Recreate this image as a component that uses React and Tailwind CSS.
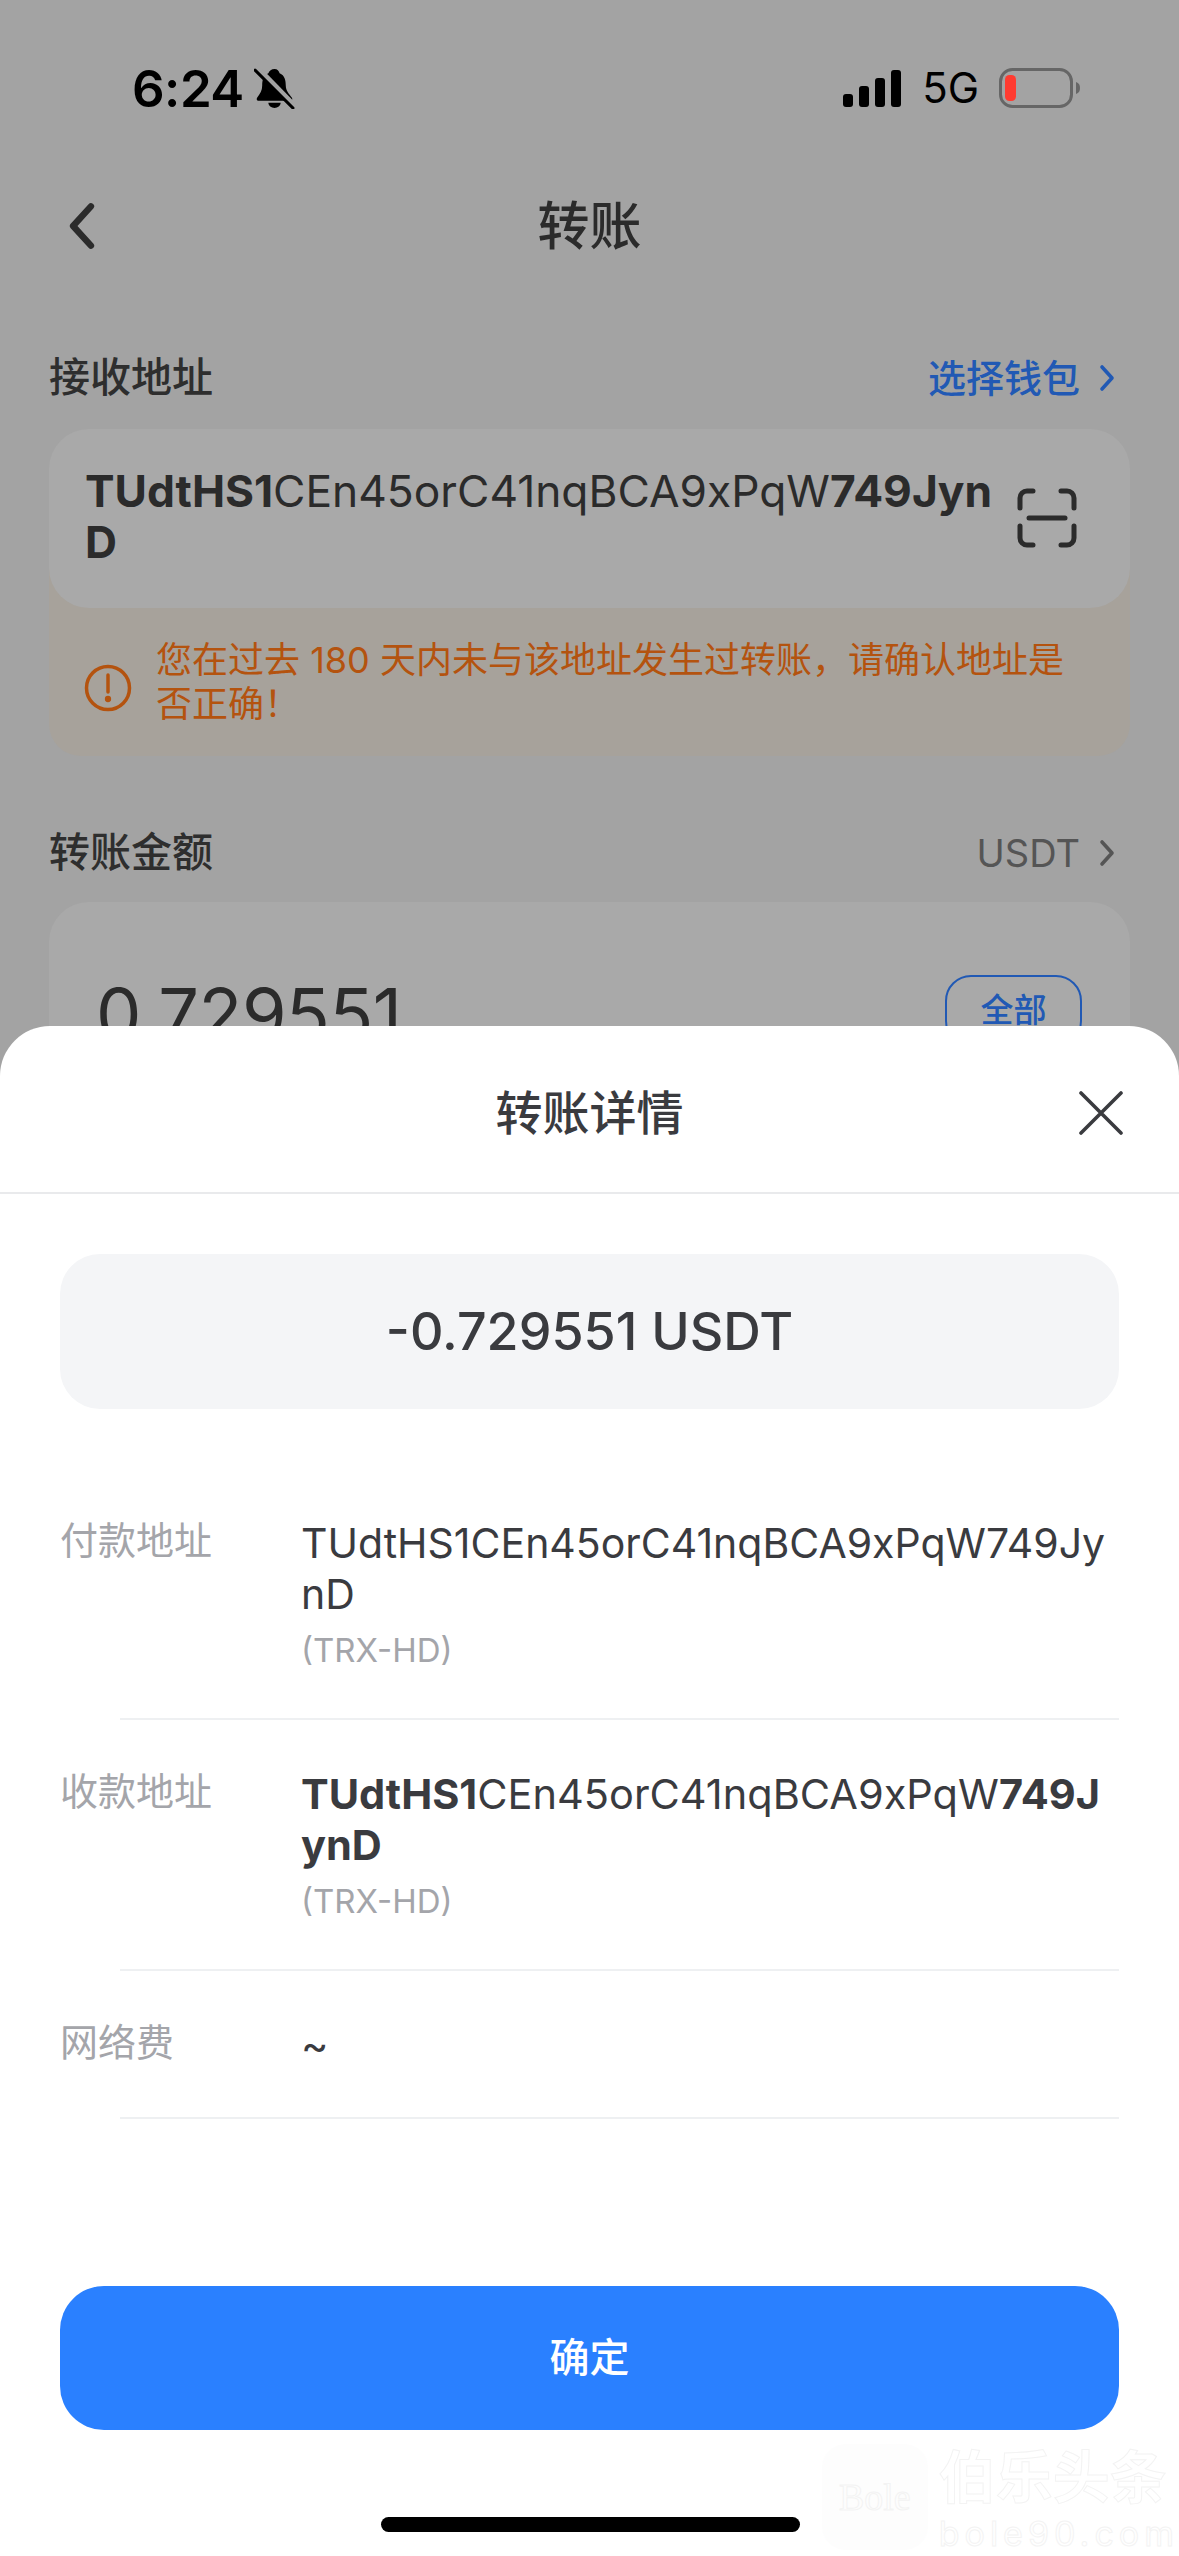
const Chevron = ({ className }) => (
  <svg viewBox="0 0 16 28" fill="none" stroke="currentColor" strokeWidth="3.6" strokeLinecap="round" strokeLinejoin="round" className={className}>
    <path d="M3 3l10 11L3 25" />
  </svg>
);

const StatusBar = () => (
  <div className="flex h-[56px] items-center justify-between pl-[132px] pr-[98px] text-black">
    <div className="flex items-center gap-[10px]">
      <span className="text-[51px] font-semibold leading-none tracking-[-0.5px]">6:24</span>
      <svg viewBox="0 0 40 40" className="h-[41px] w-[41px]">
        <path d="M20 1c3 0 4 2 5 4 5 2 6 7 6 12 0 5 3 8 6 12 1 2 0 3-2 3H5c-2 0-3-1-2-3 3-4 5-7 5-12 0-5 1-10 6-12 1-2 3-4 6-4z" fill="#000" />
        <path d="M14 34h12c0 3-3 5-6 5s-6-2-6-5z" fill="#000" />
        <path d="M3 0l36 37" stroke="#a3a3a3" strokeWidth="6" />
        <path d="M1 2l37 37" stroke="#000" strokeWidth="3" strokeLinecap="round" />
      </svg>
    </div>
    <div className="flex items-center">
      <div className="flex h-[38px] items-end gap-[6px]">
        <div className="h-[13px] w-[10px] rounded-[3px] bg-black" />
        <div className="h-[21px] w-[10px] rounded-[3px] bg-black" />
        <div className="h-[29px] w-[10px] rounded-[3px] bg-black" />
        <div className="h-[37px] w-[10px] rounded-[3px] bg-black" />
      </div>
      <span className="ml-[21px] text-[42px] font-normal leading-none">5G</span>
      <svg viewBox="0 0 82 40" className="ml-[20px] h-[40px] w-[82px]">
        <rect x="1.5" y="1.5" width="71" height="37" rx="12" fill="none" stroke="#666" strokeWidth="3" />
        <rect x="6" y="7" width="11" height="26" rx="4.5" fill="#ff3b30" />
        <path d="M77 14c3 1 4 3 4 6s-1 5-4 6z" fill="#666" />
      </svg>
    </div>
  </div>
);

const ScanIcon = () => (
  <svg viewBox="0 0 60 60" fill="none" stroke="#2b2b2b" strokeWidth="5" strokeLinecap="round" className="h-[60px] w-[60px]">
    <path d="M16 3H10a7 7 0 0 0-7 7v10" />
    <path d="M44 3h6a7 7 0 0 1 7 7v10" />
    <path d="M16 57H10a7 7 0 0 1-7-7V38" />
    <path d="M44 57h6a7 7 0 0 0 7-7V38" />
    <path d="M12 30h36" />
  </svg>
);

const Background = () => (
  <div className="pt-[60px]">
    <StatusBar />
    <div className="relative mt-[60px] flex h-[100px] items-center justify-center">
      <Chevron className="absolute left-[66px] h-[50px] w-[32px] -scale-x-100 text-[#2b2b2b]" />
      <span className="pt-[2px] text-[52px] font-medium leading-none text-[#2b2b2b]">转账</span>
    </div>

    <div className="mt-[74px] flex h-[56px] items-center justify-between pl-[49px] pr-[64px]">
      <span className="text-[41px] font-medium text-[#2e2e2e]">接收地址</span>
      <div className="flex items-center gap-[19px] text-[#2159b4]">
        <span className="text-[38px] font-medium">选择钱包</span>
        <Chevron className="h-[28px] w-[16px]" />
      </div>
    </div>

    <div className="relative z-10 mx-[49px] mt-[23px] flex h-[179px] items-start justify-between rounded-[40px] bg-[#a9a9a9] pl-[36px] pr-[53px] pt-[37px]">
      <p className="w-[918px] break-all text-[44.3px] leading-[51px] text-[#2b2b2b]">
        <b className="font-bold">TUdtHS1</b>CEn45orC41nqBCA9xPqW<b className="font-bold">749JynD</b>
      </p>
      <div className="mt-[22px]">
        <ScanIcon />
      </div>
    </div>

    <div className="mx-[49px] -mt-[40px] flex h-[188px] items-start rounded-b-[32px] bg-[#a7a29b] pl-[35px] pr-[60px] pt-[70px] text-[#b4530f]">
      <svg viewBox="0 0 48 48" fill="none" stroke="currentColor" strokeWidth="3.5" strokeLinecap="round" className="mt-[26px] h-[48px] w-[48px] shrink-0">
        <circle cx="24" cy="24" r="21.5" />
        <path d="M24 11v17" />
        <circle cx="24" cy="35" r="1.4" fill="currentColor" />
      </svg>
      <p className="ml-[24px] text-[36px] leading-[44px]">
        您在过去 180 天内未与该地址发生过转账，请确认地址是否正确！
      </p>
    </div>

    <div className="mt-[69px] flex h-[56px] items-center justify-between pl-[49px] pr-[64px]">
      <span className="text-[41px] font-medium text-[#2e2e2e]">转账金额</span>
      <div className="flex items-center gap-[19px] text-[#555]">
        <span className="text-[38px]">USDT</span>
        <Chevron className="h-[28px] w-[16px]" />
      </div>
    </div>

    <div className="mx-[49px] mt-[21px] flex h-[240px] items-start justify-between rounded-[40px] bg-[#a9a9a9] pl-[47px] pr-[48px] pt-[76px]">
      <span className="text-[72px] leading-none tracking-[-0.5px] text-[#2b2b2b]">0.729551</span>
      <div className="-mt-[3px] flex h-[72px] w-[137px] items-center justify-center rounded-[26px] border-2 border-[#2159b4] text-[33px] font-medium text-[#2159b4]">
        全部
      </div>
    </div>
  </div>
);

const Row = ({ label, children, sub, rowClass, valueClass }) => (
  <>
    <div className={`flex pt-[49px] ${rowClass}`}>
      <span className="w-[241px] shrink-0 text-[38px] leading-[44px] text-[#a4a5aa]">{label}</span>
      <div className="min-w-0 flex-1">
        <p className={`break-all leading-[51px] text-[#3a3b3f] ${valueClass}`}>{children}</p>
        {sub && <p className="mt-[5px] text-[33px] leading-[50px] text-[#a4a5aa]">{sub}</p>}
      </div>
    </div>
    <div className="ml-[60px] h-[2px] bg-[#eef0f2]" />
  </>
);

const Watermark = () => (
  <div className="absolute left-[822px] top-[2444px] flex h-[106px] w-[357px] whitespace-nowrap text-transparent [-webkit-text-stroke:1px_#f3f3f3]">
    <div className="flex h-[106px] w-[110px] items-center justify-center rounded-[24px] bg-[#fdfdfd] font-['Liberation_Serif',serif] text-[38px]">
      Bole
    </div>
    <div className="ml-[11px] flex flex-col">
      <span className="text-[57px] font-bold leading-[68px]">伯乐头条</span>
      <span className="mt-[6px] text-[34px] leading-[32px] tracking-[5px]">bole90.com</span>
    </div>
  </div>
);

const Sheet = () => (
  <div className="absolute inset-x-0 bottom-0 top-[1026px] rounded-t-[50px] bg-white">
    <div className="relative flex h-[168px] items-center justify-center border-b-2 border-[#e9eaec] pt-[7px]">
      <span className="text-[47px] font-medium leading-none text-[#3a3b3f]">转账详情</span>
      <svg viewBox="0 0 44 44" fill="none" stroke="#3a3b3f" strokeWidth="3.6" strokeLinecap="round" className="absolute right-[56px] top-[65px] h-[44px] w-[44px]">
        <path d="M2 2l40 40M42 2L2 42" />
      </svg>
    </div>

    <div className="mx-[60px] mt-[60px] flex h-[155px] items-center justify-center rounded-[40px] bg-[#f4f5f7] text-[52px] font-medium text-[#3a3b3f]">
      -0.729551 USDT
    </div>

    <div className="mx-[60px] mt-[60px]">
      <Row label="付款地址" sub="(TRX-HD)" rowClass="pb-[43px]" valueClass="text-[41px]">
        TUdtHS1CEn45orC41nqBCA9xPqW749JynD
      </Row>
      <Row label="收款地址" sub="(TRX-HD)" rowClass="pb-[43px]" valueClass="text-[41.5px]">
        <b className="font-bold">TUdtHS1</b>CEn45orC41nqBCA9xPqW<b className="font-bold">749JynD</b>
      </Row>
      <Row label="网络费" rowClass="pb-[46px]" valueClass="text-[41.5px]">~</Row>
    </div>

    <div className="mx-[60px] mt-[167px] flex h-[144px] items-center justify-center rounded-[44px] bg-[#2a80ff] text-[40px] font-medium text-white">
      确定
    </div>
  </div>
);

export default function App() {
  return (
    <div className="relative h-[2556px] overflow-hidden bg-[#a3a3a3] font-['Inter','Noto_Sans_CJK_SC',sans-serif]">
      <Background />
      <Sheet />
      <Watermark />
      <div className="absolute left-[381px] top-[2517px] h-[15px] w-[419px] rounded-full bg-black" />
    </div>
  );
}
